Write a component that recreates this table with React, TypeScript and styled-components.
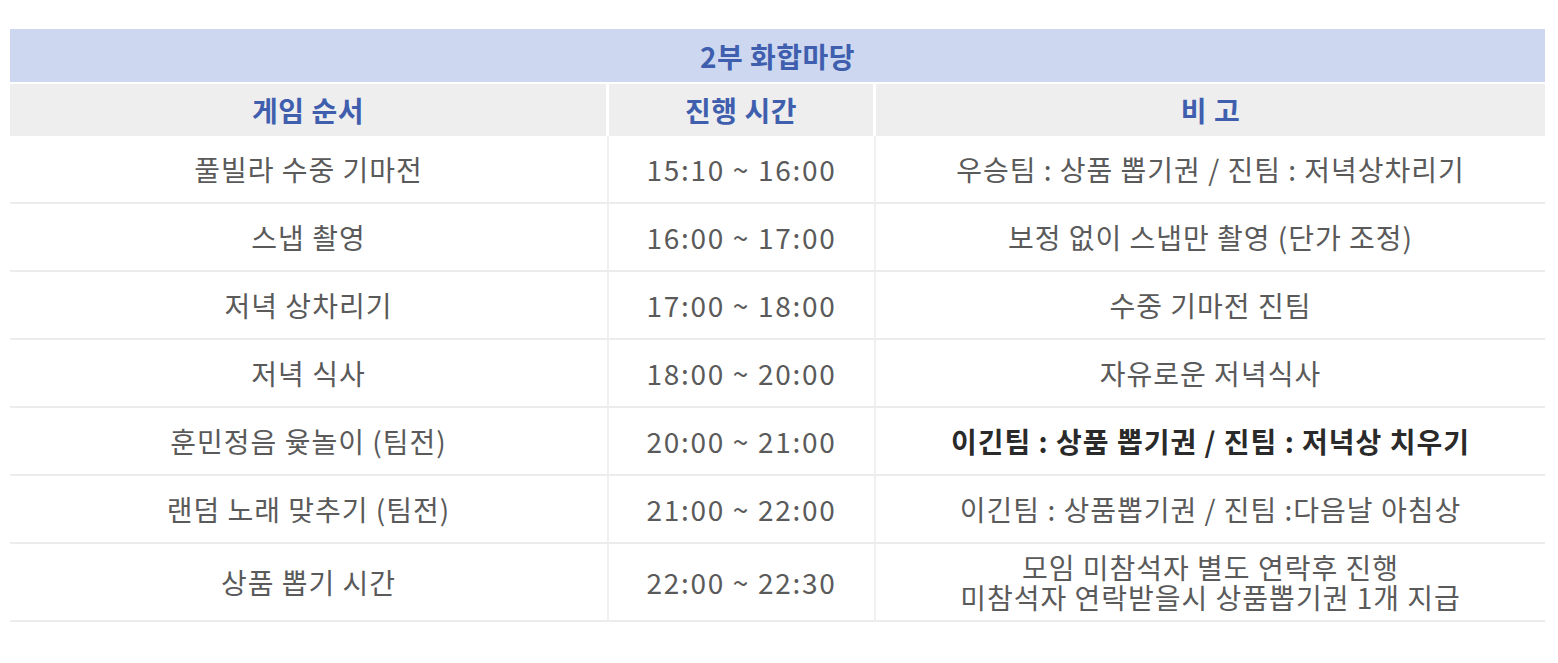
import React from "react";
import styled, { createGlobalStyle } from "styled-components";

const GlobalStyle = createGlobalStyle`
  body {
    margin: 0;
    background: #ffffff;
    font-family: "Noto Sans CJK KR", "Noto Sans", sans-serif;
  }
`;

type Row = { game: string; time: string; note: string[]; strong?: boolean };

const rows: Row[] = [
  { game: "풀빌라 수중 기마전", time: "15:10 ~ 16:00", note: ["우승팀 : 상품 뽑기권 / 진팀 : 저녁상차리기"] },
  { game: "스냅 촬영", time: "16:00 ~ 17:00", note: ["보정 없이 스냅만 촬영 (단가 조정)"] },
  { game: "저녁 상차리기", time: "17:00 ~ 18:00", note: ["수중 기마전 진팀"] },
  { game: "저녁 식사", time: "18:00 ~ 20:00", note: ["자유로운 저녁식사"] },
  {
    game: "훈민정음 윷놀이 (팀전)",
    time: "20:00 ~ 21:00",
    note: ["이긴팀 : 상품 뽑기권 / 진팀 : 저녁상 치우기"],
    strong: true,
  },
  { game: "랜덤 노래 맞추기 (팀전)", time: "21:00 ~ 22:00", note: ["이긴팀 : 상품뽑기권 / 진팀 :다음날 아침상"] },
  {
    game: "상품 뽑기 시간",
    time: "22:00 ~ 22:30",
    note: ["모임 미참석자 별도 연락후 진행", "미참석자 연락받을시 상품뽑기권 1개 지급"],
  },
];

const Page = styled.div`
  padding: 29px 13px 40px 10px;
`;

const Table = styled.div`
  display: grid;
  grid-template-columns: 599px 267px 1fr;
`;

const Title = styled.div`
  grid-column: 1 / -1;
  height: 53px;
  background: #cdd8f0;
  color: #3f5fae;
  font-size: 28px;
  font-weight: 700;
  display: flex;
  align-items: center;
  justify-content: center;
  letter-spacing: 0.5px;
`;

const HeadCell = styled.div<{ $last?: boolean }>`
  height: 52px;
  margin-top: 2px;
  background: #eeeeee;
  color: #3f5fae;
  font-size: 28px;
  font-weight: 700;
  display: flex;
  align-items: center;
  justify-content: center;
  letter-spacing: 0.5px;
  border-right: ${(p) => (p.$last ? "none" : "3px solid #ffffff")};
`;

const Cell = styled.div<{ $last?: boolean; $tall?: boolean; $strong?: boolean; $time?: boolean }>`
  height: ${(p) => (p.$tall ? "76px" : "66px")};
  border-bottom: 2px solid #ececec;
  border-right: ${(p) => (p.$last ? "none" : "2px solid #f0f0f0")};
  color: ${(p) => (p.$strong ? "#2a2a2a" : "#5a5a5a")};
  font-weight: ${(p) => (p.$strong ? 700 : 400)};
  font-size: 28px;
  line-height: 31px;
  display: flex;
  flex-direction: column;
  align-items: center;
  justify-content: center;
  text-align: center;
  letter-spacing: ${(p) => (p.$time ? "1.7px" : "1px")};
  white-space: nowrap;
`;

const NoteLine = styled.span`
  display: block;
  line-height: 30px;
`;

export default function App() {
  return (
    <Page>
      <GlobalStyle />
      <Table>
        <Title>2부 화합마당</Title>
        <HeadCell>게임 순서</HeadCell>
        <HeadCell>진행 시간</HeadCell>
        <HeadCell $last>비 고</HeadCell>
        {rows.map((r, i) => {
          const tall = r.note.length > 1;
          return (
            <React.Fragment key={i}>
              <Cell $tall={tall}>{r.game}</Cell>
              <Cell $tall={tall} $time>
                {r.time}
              </Cell>
              <Cell $tall={tall} $last $strong={r.strong}>
                {r.note.map((n) => (
                  <NoteLine key={n}>{n}</NoteLine>
                ))}
              </Cell>
            </React.Fragment>
          );
        })}
      </Table>
    </Page>
  );
}
